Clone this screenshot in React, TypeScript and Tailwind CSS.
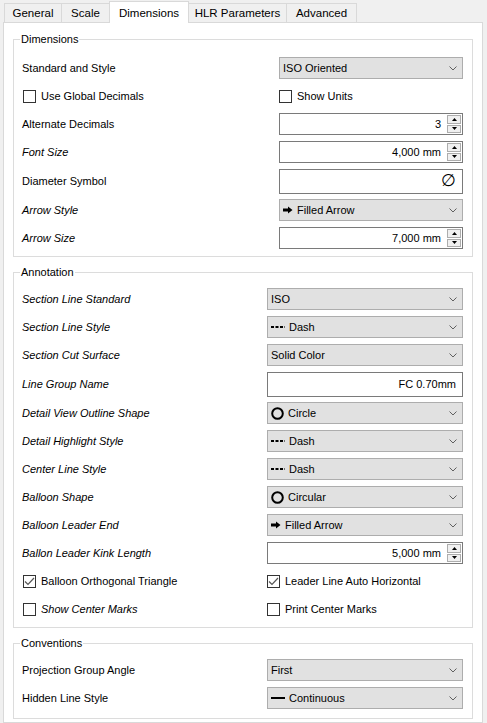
import React from "react";

type Icon = "arrow" | "dash" | "circle" | "line" | undefined;

const Chevron = () => (
  <svg width="8" height="5" viewBox="0 0 8 5" className="shrink-0">
    <polyline points="0.5,0.5 4,4 7.5,0.5" fill="none" stroke="#606060" strokeWidth="1" />
  </svg>
);

const ItemIcon = ({ icon }: { icon: Icon }) => {
  if (icon === "arrow")
    return (
      <svg width="10" height="8" viewBox="0 0 10 8" className="shrink-0">
        <path d="M0 2.5 H5 V0.5 L9.5 4 L5 7.5 V5.5 H0 Z" fill="#000" />
      </svg>
    );
  if (icon === "dash")
    return (
      <svg width="14" height="4" viewBox="0 0 14 4" className="shrink-0">
        <line x1="0" y1="2" x2="14" y2="2" stroke="#000" strokeWidth="2" strokeDasharray="3 1.5" />
      </svg>
    );
  if (icon === "circle")
    return (
      <svg width="13" height="13" viewBox="0 0 13 13" className="shrink-0">
        <circle cx="6.5" cy="6.5" r="5.3" fill="none" stroke="#000" strokeWidth="2" />
      </svg>
    );
  if (icon === "line")
    return (
      <svg width="14" height="4" viewBox="0 0 14 4" className="shrink-0">
        <line x1="0" y1="2" x2="14" y2="2" stroke="#000" strokeWidth="2" />
      </svg>
    );
  return null;
};

const Combo = ({ value, icon }: { value: string; icon?: Icon }) => (
  <div className="flex h-[22px] w-full items-center justify-between border border-[#adadad] bg-[#e1e1e1] pl-[3px] pr-[5px]">
    <div className="flex items-center gap-[4px]">
      <ItemIcon icon={icon} />
      <span>{value}</span>
    </div>
    <Chevron />
  </div>
);

const SpinBox = ({ value }: { value: string }) => (
  <div className="flex h-[22px] w-full items-center border border-[#7a7a7a] bg-white pr-[1px]">
    <span className="flex-1 pr-[6px] text-right">{value}</span>
    <div className="flex h-[18px] w-[14px] flex-col gap-px">
      <div className="flex flex-1 items-center justify-center border border-[#adadad] bg-[#f0f0f0]">
        <svg width="5" height="3" viewBox="0 0 5 3">
          <path d="M0 3 L2.5 0 L5 3 Z" fill="#000" />
        </svg>
      </div>
      <div className="flex flex-1 items-center justify-center border border-[#adadad] bg-[#f0f0f0]">
        <svg width="5" height="3" viewBox="0 0 5 3">
          <path d="M0 0 L2.5 3 L5 0 Z" fill="#000" />
        </svg>
      </div>
    </div>
  </div>
);

const TextBox = ({ value, big = false }: { value: string; big?: boolean }) => (
  <div className="flex h-[25px] w-full items-center justify-end border border-[#7a7a7a] bg-white pr-[6px]">
    <span className={big ? "text-[17px]" : ""}>{value}</span>
  </div>
);

const CheckBox = ({ label, checked = false, italic = false }: { label: string; checked?: boolean; italic?: boolean }) => (
  <div className="flex items-center gap-[5px]">
    <div className="flex size-[13px] items-center justify-center border border-[#333333] bg-white">
      {checked && (
        <svg width="11" height="9" viewBox="0 0 11 9">
          <polyline points="1,4.5 4,7.5 10,1" fill="none" stroke="#555555" strokeWidth="1.2" />
        </svg>
      )}
    </div>
    <span className={italic ? "italic" : ""}>{label}</span>
  </div>
);

const Row = ({
  label,
  italic = false,
  children,
  h = "h-[28px]",
}: {
  label: string;
  italic?: boolean;
  children: React.ReactNode;
  h?: string;
}) => (
  <>
    <div className={`flex items-center ${h} ${italic ? "italic" : ""}`}>{label}</div>
    <div className={`flex items-center ${h}`}>{children}</div>
  </>
);

const Group = ({
  title,
  className,
  children,
}: {
  title: string;
  className: string;
  children: React.ReactNode;
}) => (
  <fieldset className="mt-[7px] border border-[#dcdcdc] first:mt-[8px]">
    <legend className="ml-[6px] h-[16px] px-px leading-[16px]">{title}</legend>
    <div className={className}>{children}</div>
  </fieldset>
);

const tabs = [
  { name: "General", w: "w-[58px]" },
  { name: "Scale", w: "w-[49px]" },
  { name: "Dimensions", w: "w-[80px]", active: true },
  { name: "HLR Parameters", w: "w-[99px]" },
  { name: "Advanced", w: "w-[71px]" },
];

export default function App() {
  return (
    <div className="flex h-[723px] w-[487px] flex-col overflow-hidden bg-[#f0f0f0] font-['Liberation_Sans',Arial,sans-serif] text-[11px] leading-[16px] text-black">
      <div className="flex h-[22px] items-end pl-[4px] text-[11.5px]">
        {tabs.map((t) =>
          t.active ? (
            <div
              key={t.name}
              className={`relative z-10 -mb-px -ml-px flex h-[22px] items-center justify-center border border-b-0 border-[#d9d9d9] bg-white ${t.w}`}
            >
              {t.name}
            </div>
          ) : (
            <div
              key={t.name}
              className={`-ml-px flex h-[19px] items-center justify-center border border-b-0 border-[#d9d9d9] bg-[#f0f0f0] first:ml-0 ${t.w}`}
            >
              {t.name}
            </div>
          )
        )}
      </div>
      <div className="ml-[3px] w-[480px] flex-1 border border-[#d9d9d9] bg-white px-[9px]">
        <Group title="Dimensions" className="grid grid-cols-[1fr_184px] pb-[4px] pl-[8px] pr-[9px] pt-[7px]">
          <Row label="Standard and Style">
            <Combo value="ISO Oriented" />
          </Row>
          <div className="flex h-[28px] items-center pl-px">
            <CheckBox label="Use Global Decimals" />
          </div>
          <div className="flex h-[28px] items-center">
            <CheckBox label="Show Units" />
          </div>
          <Row label="Alternate Decimals">
            <SpinBox value="3" />
          </Row>
          <Row label="Font Size" italic>
            <SpinBox value="4,000 mm" />
          </Row>
          <Row label="Diameter Symbol" h="h-[30px]">
            <TextBox value="∅" big />
          </Row>
          <Row label="Arrow Style" italic>
            <Combo value="Filled Arrow" icon="arrow" />
          </Row>
          <Row label="Arrow Size" italic>
            <SpinBox value="7,000 mm" />
          </Row>
        </Group>

        <Group title="Annotation" className="grid grid-cols-[1fr_196px] pb-[4px] pl-[8px] pr-[9px] pt-[5px]">
          <Row label="Section Line Standard" italic>
            <Combo value="ISO" />
          </Row>
          <Row label="Section Line Style" italic>
            <Combo value="Dash" icon="dash" />
          </Row>
          <Row label="Section Cut Surface" italic>
            <Combo value="Solid Color" />
          </Row>
          <Row label="Line Group Name" italic h="h-[30px]">
            <TextBox value="FC 0.70mm" />
          </Row>
          <Row label="Detail View Outline Shape" italic>
            <Combo value="Circle" icon="circle" />
          </Row>
          <Row label="Detail Highlight Style" italic>
            <Combo value="Dash" icon="dash" />
          </Row>
          <Row label="Center Line Style" italic>
            <Combo value="Dash" icon="dash" />
          </Row>
          <Row label="Balloon Shape" italic>
            <Combo value="Circular" icon="circle" />
          </Row>
          <Row label="Balloon Leader End" italic>
            <Combo value="Filled Arrow" icon="arrow" />
          </Row>
          <Row label="Ballon Leader Kink Length" italic>
            <SpinBox value="5,000 mm" />
          </Row>
          <div className="flex h-[28px] items-center pl-px">
            <CheckBox label="Balloon Orthogonal Triangle" checked />
          </div>
          <div className="flex h-[28px] items-center">
            <CheckBox label="Leader Line Auto Horizontal" checked />
          </div>
          <div className="flex h-[28px] items-center pl-px">
            <CheckBox label="Show Center Marks" italic />
          </div>
          <div className="flex h-[28px] items-center">
            <CheckBox label="Print Center Marks" />
          </div>
        </Group>

        <Group title="Conventions" className="grid grid-cols-[1fr_196px] pb-[6px] pl-[8px] pr-[9px] pt-[5px]">
          <Row label="Projection Group Angle">
            <Combo value="First" />
          </Row>
          <Row label="Hidden Line Style">
            <Combo value="Continuous" icon="line" />
          </Row>
        </Group>
      </div>
    </div>
  );
}
